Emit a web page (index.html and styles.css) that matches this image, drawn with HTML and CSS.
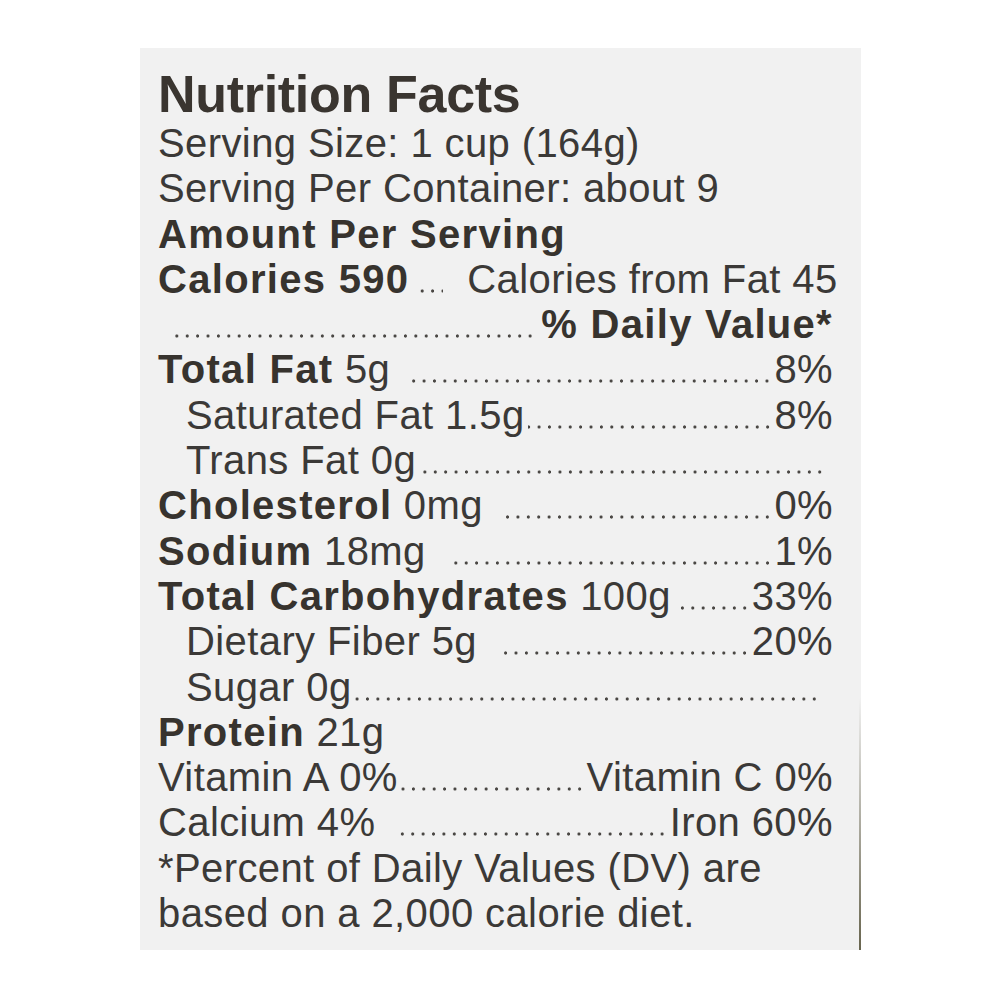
FILE: index.html
```html
<!DOCTYPE html>
<html>
<head>
<meta charset="utf-8">
<link rel="stylesheet" href="styles.css">
</head>
<body>
<div class="stage">
  <div class="label">
    <h1 class="title">Nutrition Facts</h1>
    <div class="row first">Serving Size: 1 cup (164g)</div>
    <div class="row">Serving Per Container: about 9</div>
    <div class="row"><b>Amount Per Serving</b></div>
    <div class="row"><span><b>Calories 590</b></span><span class="lead cal"></span><span>Calories from Fat 45</span></div>
    <div class="row"><span class="lead dv"></span><b>% Daily Value*</b></div>
    <div class="row"><span><b>Total Fat</b> 5g</span><span class="lead gap"></span><span>8%</span></div>
    <div class="row sub"><span>Saturated Fat 1.5g</span><span class="lead"></span><span>8%</span></div>
    <div class="row sub"><span>Trans Fat 0g</span><span class="lead end"></span></div>
    <div class="row"><span><b>Cholesterol</b> 0mg</span><span class="lead gap"></span><span>0%</span></div>
    <div class="row"><span><b>Sodium</b> 18mg</span><span class="lead gap"></span><span>1%</span></div>
    <div class="row"><span><b>Total Carbohydrates</b> 100g</span><span class="lead"></span><span>33%</span></div>
    <div class="row sub"><span>Dietary Fiber 5g</span><span class="lead gap"></span><span>20%</span></div>
    <div class="row sub"><span>Sugar 0g</span><span class="lead end2"></span></div>
    <div class="row"><span><b>Protein</b> 21g</span></div>
    <div class="row"><span>Vitamin A 0%</span><span class="lead"></span><span>Vitamin C 0%</span></div>
    <div class="row"><span>Calcium 4%</span><span class="lead gap"></span><span>Iron 60%</span></div>
    <div class="row foot">*Percent of Daily Values (DV) are</div>
    <div class="row foot">based on a 2,000 calorie diet.</div>
  </div>
</div>
</body>
</html>
```
FILE: styles.css
```css
html, body {
  margin: 0;
  padding: 0;
  background: #ffffff;
}

.stage {
  padding: 48px 0 0 140px;
}

.label {
  width: 721px;
  height: 902px;
  box-sizing: border-box;
  padding: 22px 28px 0 18px;
  background:
    linear-gradient(to bottom, rgba(80, 76, 50, 0) 72%, rgba(80, 76, 50, 0.85) 100%) right top / 2px 100% no-repeat,
    #f1f1f1;
  font-family: "Liberation Sans", Arial, sans-serif;
  color: #3b3937;
}

.title {
  margin: 0;
  font-size: 52px;
  line-height: 48px;
  font-weight: bold;
  color: #3a3530;
  letter-spacing: -0.3px;
}

.row {
  display: flex;
  align-items: baseline;
  font-size: 40px;
  line-height: 45.3px;
  letter-spacing: 0.4px;
  white-space: nowrap;
}

.row.first {
  margin-top: 3px;
}

.row b {
  font-weight: bold;
  color: #37332e;
  letter-spacing: 1.3px;
}

.sub {
  padding-left: 28px;
}

.lead {
  flex: 1;
  align-self: stretch;
  margin: 0 2px 0 3px;
  background-image: radial-gradient(circle, #4a4744 1.3px, rgba(74, 71, 68, 0) 1.9px);
  background-size: 10.4px 6px;
  background-repeat: repeat-x;
  background-position: right 0 top 31px;
}

.lead.gap {
  margin-left: 22px;
}

.lead.cal {
  flex: 0 0 26px;
  margin: 0 24px 0 8px;
  background-position: left 0 top 31px;
}

.lead.dv {
  margin: 0 6px 0 12px;
}

.lead.end {
  margin-right: 8px;
}

.lead.end2 {
  margin-right: 14px;
}
```
